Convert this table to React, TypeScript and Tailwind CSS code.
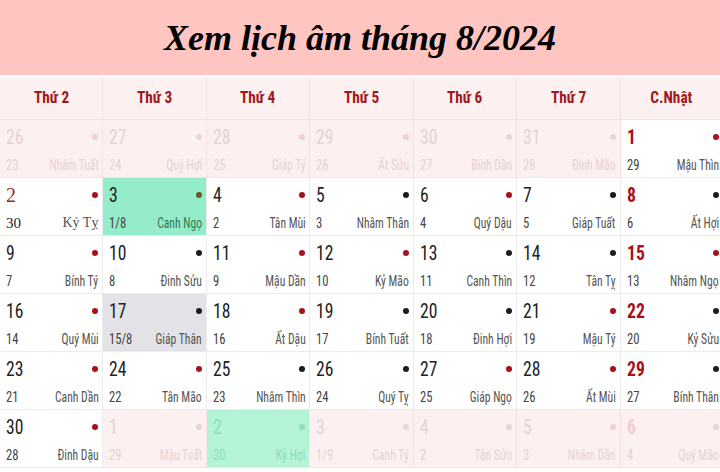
import clsx from "clsx";

type Day = {
    d: string;
    lunar: string;
    canChi: string;
    dot: "red" | "black";
    kind?: "out" | "today" | "full" | "outGreen";
    sunday?: boolean;
    serif?: boolean;
};

const headers = ["Thứ 2", "Thứ 3", "Thứ 4", "Thứ 5", "Thứ 6", "Thứ 7", "C.Nhật"];

const days: Day[] = [
    { d: "26", lunar: "23", canChi: "Nhâm Tuất", dot: "red", kind: "out" },
    { d: "27", lunar: "24", canChi: "Quý Hợi", dot: "black", kind: "out" },
    { d: "28", lunar: "25", canChi: "Giáp Tý", dot: "red", kind: "out" },
    { d: "29", lunar: "26", canChi: "Ất Sửu", dot: "red", kind: "out" },
    { d: "30", lunar: "27", canChi: "Bính Dần", dot: "black", kind: "out" },
    { d: "31", lunar: "28", canChi: "Đinh Mão", dot: "black", kind: "out" },
    { d: "1", lunar: "29", canChi: "Mậu Thìn", dot: "red", sunday: true },

    { d: "2", lunar: "30", canChi: "Kỷ Tỵ", dot: "red", serif: true },
    { d: "3", lunar: "1/8", canChi: "Canh Ngọ", dot: "red", kind: "today" },
    { d: "4", lunar: "2", canChi: "Tân Mùi", dot: "red" },
    { d: "5", lunar: "3", canChi: "Nhâm Thân", dot: "black" },
    { d: "6", lunar: "4", canChi: "Quý Dậu", dot: "red" },
    { d: "7", lunar: "5", canChi: "Giáp Tuất", dot: "black" },
    { d: "8", lunar: "6", canChi: "Ất Hợi", dot: "black", sunday: true },

    { d: "9", lunar: "7", canChi: "Bính Tý", dot: "red" },
    { d: "10", lunar: "8", canChi: "Đinh Sửu", dot: "black" },
    { d: "11", lunar: "9", canChi: "Mậu Dần", dot: "red" },
    { d: "12", lunar: "10", canChi: "Kỷ Mão", dot: "red" },
    { d: "13", lunar: "11", canChi: "Canh Thìn", dot: "black" },
    { d: "14", lunar: "12", canChi: "Tân Tỵ", dot: "black" },
    { d: "15", lunar: "13", canChi: "Nhâm Ngọ", dot: "red", sunday: true },

    { d: "16", lunar: "14", canChi: "Quý Mùi", dot: "red" },
    { d: "17", lunar: "15/8", canChi: "Giáp Thân", dot: "black", kind: "full" },
    { d: "18", lunar: "16", canChi: "Ất Dậu", dot: "red" },
    { d: "19", lunar: "17", canChi: "Bính Tuất", dot: "black" },
    { d: "20", lunar: "18", canChi: "Đinh Hợi", dot: "black" },
    { d: "21", lunar: "19", canChi: "Mậu Tý", dot: "red" },
    { d: "22", lunar: "20", canChi: "Kỷ Sửu", dot: "black", sunday: true },

    { d: "23", lunar: "21", canChi: "Canh Dần", dot: "red" },
    { d: "24", lunar: "22", canChi: "Tân Mão", dot: "red" },
    { d: "25", lunar: "23", canChi: "Nhâm Thìn", dot: "black" },
    { d: "26", lunar: "24", canChi: "Quý Tỵ", dot: "black" },
    { d: "27", lunar: "25", canChi: "Giáp Ngọ", dot: "red" },
    { d: "28", lunar: "26", canChi: "Ất Mùi", dot: "red" },
    { d: "29", lunar: "27", canChi: "Bính Thân", dot: "black", sunday: true },

    { d: "30", lunar: "28", canChi: "Đinh Dậu", dot: "red" },
    { d: "1", lunar: "29", canChi: "Mậu Tuất", dot: "black", kind: "out" },
    { d: "2", lunar: "30", canChi: "Kỷ Hợi", dot: "black", kind: "outGreen" },
    { d: "3", lunar: "1/9", canChi: "Canh Tý", dot: "black", kind: "out" },
    { d: "4", lunar: "2", canChi: "Tân Sửu", dot: "black", kind: "out" },
    { d: "5", lunar: "3", canChi: "Nhâm Dần", dot: "red", kind: "out" },
    { d: "6", lunar: "4", canChi: "Quý Mão", dot: "black", kind: "out", sunday: true },
];

const cond = "font-['Roboto_Condensed',Roboto,sans-serif]";

function DayCell({ day }: { day: Day }) {
    const out = day.kind === "out";
    const outGreen = day.kind === "outGreen";
    const faded = out || outGreen;

    const dotColor = outGreen
        ? "bg-[#8fdcb8]"
        : out
          ? day.dot === "red"
              ? "bg-[#f1cfcf]"
              : "bg-[#e3d8d8]"
          : day.kind === "today"
            ? "bg-[#6a5526]"
            : day.dot === "red"
              ? "bg-[#a8101a]"
              : "bg-[#1c1c1c]";

    return (
        <div
            className={clsx(
                "flex h-[58px] flex-col justify-between border-b border-r border-[#ececec] pb-[2px] pl-[6px] pr-[4px] pt-[5px]",
                out && "border-[#f6e2e2] bg-[#fdf0f0]",
                outGreen && "bg-[#b4f3d6]",
                day.kind === "today" && "bg-[#95ecca]",
                day.kind === "full" && "bg-[#e2e2e7]",
                !day.kind && "bg-white",
            )}
        >
            <div className="flex items-center justify-between">
                <span
                    className={clsx(
                        "inline-block origin-left text-[20px] leading-[24px]",
                        day.serif ? "font-['Liberation_Serif',serif] text-[#a21f1f]" : clsx(cond, "scale-x-[0.88]"),
                        day.sunday && "font-bold",
                        faded
                            ? day.sunday
                                ? "text-[#f0cfcf]"
                                : outGreen
                                  ? "text-[#8fdcb8]"
                                  : "text-[#e6d3d3]"
                            : day.sunday
                              ? "text-[#a8101a]"
                              : !day.serif && "text-[#222]",
                    )}
                >
                    {day.d}
                </span>
                <span className={clsx("h-[6px] w-[6px] rounded-full", dotColor)} />
            </div>
            <div className="flex items-end justify-between text-[14px] leading-[20px]">
                <span
                    className={clsx(
                        "inline-block origin-left",
                        day.serif ? "font-['Liberation_Serif',serif] text-[15px] text-[#222]" : clsx(cond, "scale-x-[0.9]"),
                        faded ? (outGreen ? "text-[#8fdcb8]" : "text-[#e6d3d3]") : !day.serif && "text-[#444]",
                    )}
                >
                    {day.lunar}
                </span>
                <span
                    className={clsx(
                        "inline-block origin-right whitespace-nowrap",
                        day.serif ? "font-['Liberation_Serif',serif] text-[#555]" : clsx(cond, "scale-x-[0.83]"),
                        faded ? (outGreen ? "text-[#8fdcb8]" : "text-[#e6d3d3]") : day.kind === "today" ? "text-[#2f7a55]" : "text-[#555]",
                    )}
                >
                    {day.canChi}
                </span>
            </div>
        </div>
    );
}

export default function App() {
    return (
        <div className="h-[472px] w-[720px] overflow-hidden bg-white">
            <div className="flex h-[75px] items-center justify-center bg-[#fec5c1]">
                <h1 className="font-['Liberation_Serif',serif] text-[36px] font-bold italic leading-none text-black">
                    Xem lịch âm tháng 8/2024
                </h1>
            </div>
            <div className="mt-[2px] grid w-[724px] grid-cols-7">
                {headers.map((h) => (
                    <div
                        key={h}
                        className={clsx(
                            "flex h-[43px] items-center justify-center border-b border-r border-[#f1e1e1] bg-[#fdf0f0] text-[17px] font-bold text-[#a0191c]",
                            cond,
                        )}
                    >
                        <span className="inline-block scale-x-[0.9]">{h}</span>
                    </div>
                ))}
                {days.map((day, i) => (
                    <DayCell key={i} day={day} />
                ))}
            </div>
        </div>
    );
}
